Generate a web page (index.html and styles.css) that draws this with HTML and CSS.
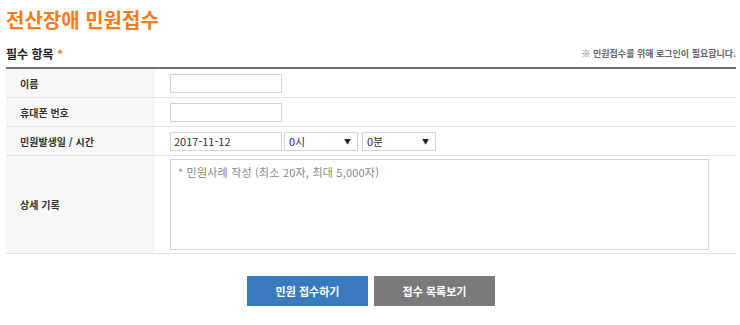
FILE: index.html
```html
<!DOCTYPE html>
<html lang="ko">
<head>
<meta charset="utf-8">
<link rel="stylesheet" href="styles.css">
</head>
<body>
<div class="page">
  <h1 class="title">전산장애 민원접수</h1>
  <div class="subhead">
    <h2 class="req">필수 항목 <span class="star">*</span></h2>
    <p class="notice">※ 민원접수를 위해 로그인이 필요합니다.</p>
  </div>
  <table class="form">
    <tr>
      <th>이름</th>
      <td><span class="input"></span></td>
    </tr>
    <tr>
      <th>휴대폰 번호</th>
      <td><span class="input"></span></td>
    </tr>
    <tr>
      <th>민원발생일 / 시간</th>
      <td>
        <div class="dt">
          <span class="input">2017-11-12</span>
          <span class="select">0시<i class="arr">▼</i></span>
          <span class="select sel2">0분<i class="arr">▼</i></span>
        </div>
      </td>
    </tr>
    <tr class="tall">
      <th>상세 기록</th>
      <td><div class="textarea">* 민원사례 작성 (최소 20자, 최대 5,000자)</div></td>
    </tr>
  </table>
  <div class="buttons">
    <span class="btn blue">민원 접수하기</span>
    <span class="btn gray">접수 목록보기</span>
  </div>
</div>
</body>
</html>
```
FILE: styles.css
```css
html, body { margin: 0; padding: 0; background: #fff; }
body { font-family: "Noto Sans CJK KR", "Noto Sans", sans-serif; color: #333; }
.page { margin-left: 6px; width: 730px; }
.title { margin: 0; padding-top: 6px; height: 31px; font-size: 20px; line-height: 28px; font-weight: bold; color: #f57b20; }
.subhead { display: flex; justify-content: space-between; align-items: center; height: 32px; padding-top: 2px; border-bottom: 2px solid #6f6f74; box-sizing: border-box; }
.req { margin: 0; font-size: 12px; font-weight: bold; color: #222; }
.star { color: #f57b20; }
.notice { margin: 0; font-size: 9px; color: #666; font-weight: bold; }
.form { width: 100%; border-collapse: collapse; }
.form th { width: 135px; height: 28px; padding: 0 0 0 14px; text-align: left; background: #f7f7f7; font-size: 10px; font-weight: bold; color: #333; border-bottom: 1px solid #e2e2e2; }
.form td { padding: 0 0 0 15px; height: 28px; border-bottom: 1px solid #e2e2e2; }
.form tr.tall th, .form tr.tall td { height: 97px; }
.input { display: block; box-sizing: border-box; width: 112px; height: 19px; border: 1px solid #d4d4d4; font-size: 11px; line-height: 17px; padding-left: 3px; color: #333; }
.dt { display: flex; gap: 2px; }
.select { position: relative; display: block; box-sizing: border-box; width: 74px; height: 19px; border: 1px solid #d4d4d4; font-size: 11px; line-height: 17px; padding-left: 4px; color: #333; }
.sel2 { margin-left: 2px; }
.arr { position: absolute; right: 6px; top: 0; font-style: normal; font-size: 7px; color: #222; }
.textarea { box-sizing: border-box; width: 539px; height: 91px; border: 1px solid #d4d4d4; padding: 4px 7px; font-size: 11px; color: #888; letter-spacing: 0.2px; }
.buttons { display: flex; justify-content: center; gap: 6px; margin-top: 22px; }
.btn { display: block; width: 121px; height: 30px; line-height: 30px; text-align: center; color: #fff; font-size: 11px; font-weight: bold; }
.blue { background: #3a7bbe; }
.gray { background: #7a7a7a; }
```
